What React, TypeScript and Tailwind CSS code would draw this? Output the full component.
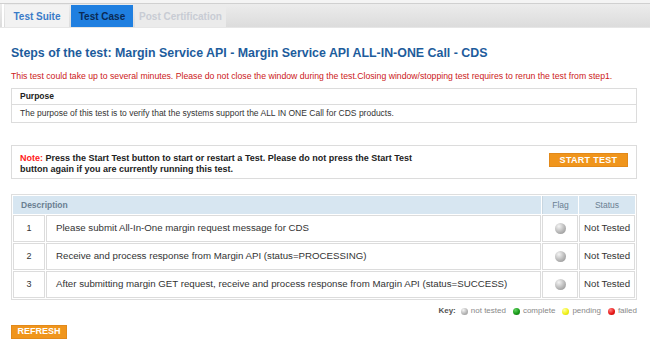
import React from 'react';

const steps = [
  'Please submit All-In-One margin request message for CDS',
  'Receive and process response from Margin API (status=PROCESSING)',
  'After submitting margin GET request, receive and process response from Margin API (status=SUCCESS)',
];

function Ball({ color, size = 'w-[11px] h-[11px]' }: { color: string; size?: string }) {
  const grad: Record<string, string> = {
    gray: 'bg-[radial-gradient(circle_at_35%_30%,#f4f4f4,#b8b8b8_55%,#8a8a8a)]',
    green: 'bg-[radial-gradient(circle_at_35%_30%,#5fd35f,#1a9a1a_55%,#0b6b0b)]',
    yellow: 'bg-[radial-gradient(circle_at_35%_30%,#ffffa0,#f2f21a_55%,#c9c900)]',
    red: 'bg-[radial-gradient(circle_at_35%_30%,#ff8080,#e81a1a_55%,#b00000)]',
  };
  return <span className={`inline-block rounded-full ${size} ${grad[color]}`} />;
}

export default function App() {
  return (
    <div className="w-[650px] h-[345px] bg-white overflow-hidden font-['Liberation_Sans',Arial,sans-serif]">
      {/* top strip */}
      <div className="h-[4px] border-b border-[#d0d0d0] bg-[#f4f4f4]" />
      <div className="h-[24px] flex items-end pl-[2px] bg-[linear-gradient(#ececec,#dcdcdc)] border-b border-[#e6e6e6]">
        <div className="w-[2px] h-full bg-white" />
        <div className="flex gap-[2px] h-[22px] ml-[1px]">
          <div className="w-[64px] flex items-center justify-center bg-[#f2f2f2] text-[10px] font-bold text-[#3a7bc8]">
            Test Suite
          </div>
          <div className="w-[62px] flex items-center justify-center bg-[#1f7fe0] text-[10px] font-bold text-[#0a2a55]">
            Test Case
          </div>
          <div className="w-[91px] flex items-center justify-center bg-[#ebebeb] text-[10px] font-bold text-[#c8ccd4]">
            Post Certification
          </div>
        </div>
      </div>

      <div className="px-[11px]">
        <h1 className="mt-[16px] text-[12.4px] font-bold text-[#1d5c9c] leading-[18px]">
          Steps of the test: Margin Service API - Margin Service API ALL-IN-ONE Call - CDS
        </h1>
        <p className="mt-[8px] text-[8.7px] text-[#cc2020] leading-[12px]">
          This test could take up to several minutes. Please do not close the window during the test.Closing window/stopping test requires to rerun the test from step1.
        </p>

        <div className="mt-[6px] w-[626px] border border-[#dcdcdc] text-[8.5px]">
          <div className="h-[16px] flex items-center px-[8px] font-bold text-[#222] border-b border-[#dcdcdc]">
            Purpose
          </div>
          <div className="h-[17px] flex items-center px-[8px] text-[#333]">
            The purpose of this test is to verify that the systems support the ALL IN ONE Call for CDS products.
          </div>
        </div>

        <div className="mt-[22px] w-[626px] h-[34px] border border-[#dcdcdc] flex items-center justify-between pl-[8px] pr-[8px]">
          <p className="w-[414px] text-[9px] font-bold text-[#222] leading-[11px] pt-[3px]">
            <span className="text-[#ff2020]">Note: </span>Press the Start Test button to start or restart a Test. Please do not press the Start Test button again if you are currently running this test.
          </p>
          <button className="w-[79px] h-[14px] mb-[4px] bg-[#f0951c] border border-[#e2891a] text-white text-[9px] font-bold tracking-[0.3px] leading-none">
            START TEST
          </button>
        </div>

        <table className="mt-[15px] w-[626px] border-separate border-spacing-[1px] border border-[#dedede] text-[9.7px] text-[#333]">
          <thead>
            <tr className="h-[18px] bg-[#d7e6f1] text-[8.5px]">
              <th colSpan={2} className="text-left pl-[8px] font-bold text-[#6a7f92]">Description</th>
              <th className="w-[36px] font-normal text-[#6a7f92] border-l border-[#c8d6e0]">Flag</th>
              <th className="w-[56px] font-normal text-[#6a7f92]">Status</th>
            </tr>
          </thead>
          <tbody>
            {steps.map((s, i) => (
              <tr key={i} className="h-[27px]">
                <td className="w-[32px] text-center border border-[#dcdcdc] text-[9px]">{i + 1}</td>
                <td className="pl-[9px] border border-[#dcdcdc]">{s}</td>
                <td className="text-center border border-[#dcdcdc]">
                  <div className="flex justify-center">
                    <Ball color="gray" />
                  </div>
                </td>
                <td className="pl-[4px] border border-[#dcdcdc] whitespace-nowrap">Not Tested</td>
              </tr>
            ))}
          </tbody>
        </table>

        <div className="w-[626px] mt-[5px] flex justify-end items-center gap-[3px] text-[8px] text-[#888]">
          <span className="font-bold text-[#555] mr-[2px]">Key:</span>
          <Ball color="gray" size="w-[7px] h-[7px]" />
          <span className="mr-[4px]">not tested</span>
          <Ball color="green" size="w-[7px] h-[7px]" />
          <span className="mr-[4px]">complete</span>
          <Ball color="yellow" size="w-[7px] h-[7px]" />
          <span className="mr-[4px]">pending</span>
          <Ball color="red" size="w-[7px] h-[7px]" />
          <span>failed</span>
        </div>

        <button className="mt-[1px] w-[56px] h-[14px] bg-[#f0951c] border border-[#e2891a] text-white text-[9px] font-bold leading-none">
          REFRESH
        </button>
      </div>
    </div>
  );
}
